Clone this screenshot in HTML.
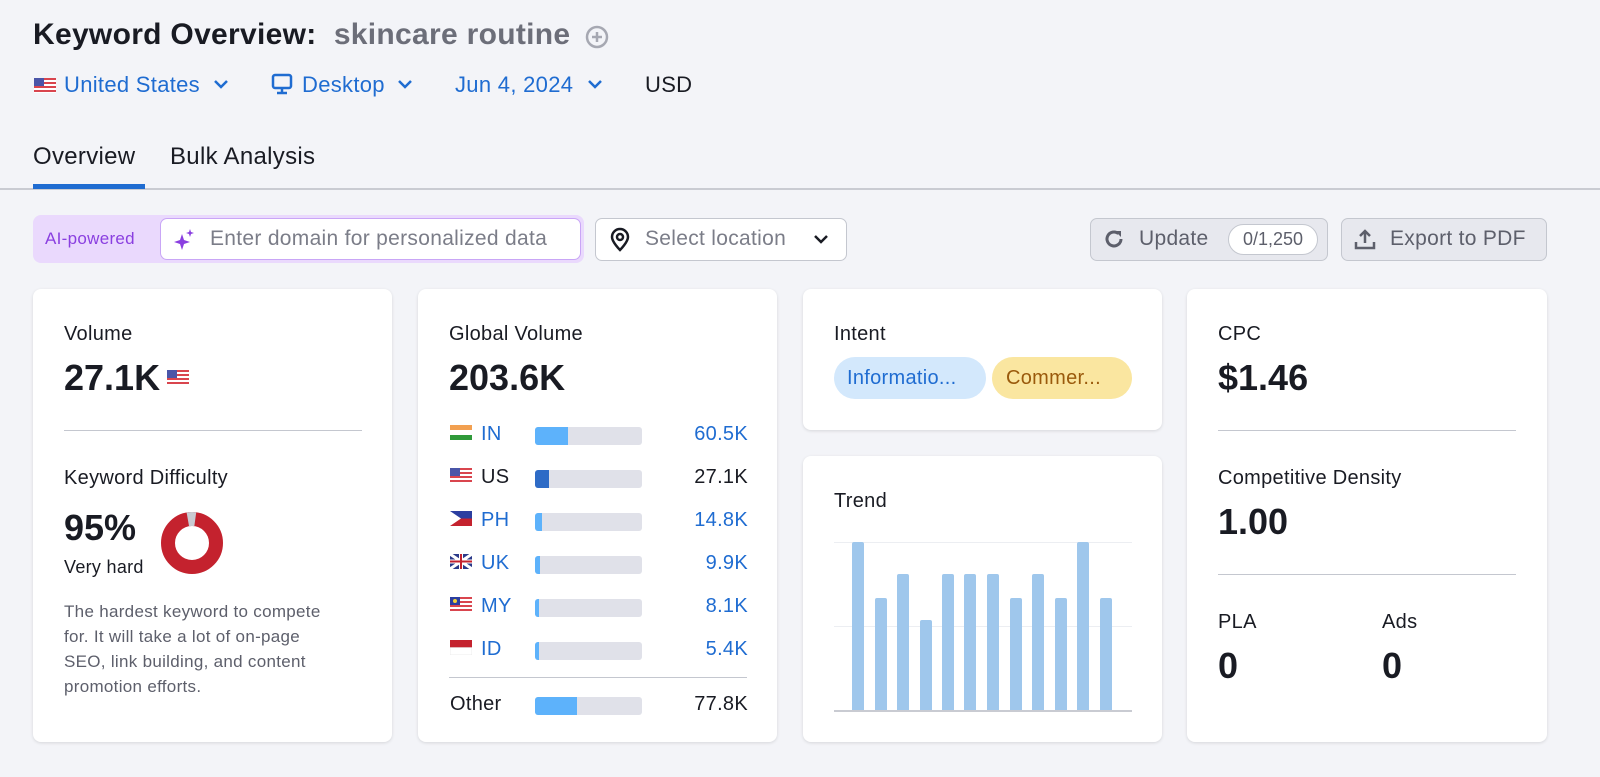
<!DOCTYPE html>
<html><head><meta charset="utf-8"><style>
*{box-sizing:border-box;margin:0;padding:0}
body{width:1600px;height:777px;background:#f3f4f8;font-family:"Liberation Sans",sans-serif;color:#191b23;position:relative;overflow:hidden;letter-spacing:0.3px}
.a{position:absolute}
.card{position:absolute;background:#fff;border-radius:8px;box-shadow:0 1px 3px rgba(0,0,0,.12)}
.lbl{font-size:20px;color:#191b23}
.big{font-size:36px;font-weight:bold;letter-spacing:0}
.blue{color:#1f6cd1}
.hr{position:absolute;height:1px;background:#c4c7cf}
.row{position:absolute;left:32px;width:298px;height:24px;font-size:20px}
.bar{position:absolute;left:85px;top:4px;width:107px;height:18px;background:#e0e1e9;border-radius:3px;overflow:hidden}
.bar i{display:block;height:100%;background:#5db2fb}
.val{position:absolute;right:0;top:0}
.fl{position:absolute;left:0;top:2px;width:22px;height:15px}
.tb{position:absolute;width:12px;background:#9fc7ec;border-radius:2px 2px 0 0;bottom:0}
</style></head><body>
<div class="a" style="left:33px;top:18px;font-size:30px;font-weight:bold;letter-spacing:0.3px">Keyword Overview:&nbsp; <span style="color:#6c6e79">skincare routine</span></div>
<svg class="a" style="left:585px;top:25px" width="24" height="24"><circle cx="12" cy="12" r="10" fill="none" stroke="#a6a8b2" stroke-width="2.5"/><path d="M12 7v10M7 12h10" stroke="#a6a8b2" stroke-width="2.5"/></svg>
<svg class="a" style="left:34px;top:78px" width="22" height="15"><rect width="22" height="15" fill="#fff"/><g fill="#d9454e"><rect y="0" width="22" height="2"/><rect y="4" width="22" height="2"/><rect y="8" width="22" height="2"/><rect y="12" width="22" height="2"/></g><rect width="10" height="8" fill="#4a55a8"/></svg>
<div class="a blue" style="left:64px;top:72px;font-size:22px">United States</div>
<svg class="a" style="left:212px;top:78px" width="18" height="12"><path d="M3 3l6 6 6-6" fill="none" stroke="#1f6cd1" stroke-width="2.5"/></svg>
<svg class="a" style="left:271px;top:73px" width="22" height="24"><rect x="2" y="2" width="18" height="13" rx="2" fill="none" stroke="#1f6cd1" stroke-width="2.5"/><path d="M11 15v4M6 20h10" stroke="#1f6cd1" stroke-width="2.5"/></svg>
<div class="a blue" style="left:302px;top:72px;font-size:22px">Desktop</div>
<svg class="a" style="left:396px;top:78px" width="18" height="12"><path d="M3 3l6 6 6-6" fill="none" stroke="#1f6cd1" stroke-width="2.5"/></svg>
<div class="a blue" style="left:455px;top:72px;font-size:22px">Jun 4, 2024</div>
<svg class="a" style="left:586px;top:78px" width="18" height="12"><path d="M3 3l6 6 6-6" fill="none" stroke="#1f6cd1" stroke-width="2.5"/></svg>
<div class="a" style="left:645px;top:72px;font-size:22px">USD</div>
<div class="a" style="left:33px;top:143px;font-size:24px">Overview</div>
<div class="a" style="left:170px;top:143px;font-size:24px">Bulk Analysis</div>
<div class="a" style="left:0;top:188px;width:1600px;height:2px;background:#c9cbd2"></div>
<div class="a" style="left:33px;top:184px;width:112px;height:5px;background:#1f6cd1"></div>
<div class="a" style="left:33px;top:215px;width:551px;height:48px;background:#ead9fd;border-radius:8px"></div>
<div class="a" style="left:45px;top:229px;font-size:17px;color:#8a3fe0">AI-powered</div>
<div class="a" style="left:160px;top:218px;width:421px;height:42px;background:#fff;border:1.5px solid #c9a6f6;border-radius:7px"></div>
<svg class="a" style="left:173px;top:228px" width="22" height="24"><path d="M9 6l2 6 6 2-6 2-2 6-2-6-6-2 6-2z" fill="#8a3fe0"/><path d="M17 1l1 3 3 1-3 1-1 3-1-3-3-1 3-1z" fill="#8a3fe0"/></svg>
<div class="a" style="left:210px;top:227px;font-size:21px;color:#7b7d88">Enter domain for personalized data</div>
<div class="a" style="left:595px;top:218px;width:252px;height:43px;background:#fff;border:1.5px solid #c4c7cf;border-radius:7px"></div>
<svg class="a" style="left:609px;top:227px" width="22" height="26"><path d="M11 23s-8-8-8-13a8 8 0 0116 0c0 5-8 13-8 13z" fill="none" stroke="#191b23" stroke-width="2.5"/><circle cx="11" cy="10" r="3" fill="none" stroke="#191b23" stroke-width="2.5"/></svg>
<div class="a" style="left:645px;top:227px;font-size:21px;color:#7b7d88">Select location</div>
<svg class="a" style="left:812px;top:233px" width="18" height="12"><path d="M3 3l6 6 6-6" fill="none" stroke="#191b23" stroke-width="2.5"/></svg>
<div class="a" style="left:1090px;top:218px;width:238px;height:43px;background:#e7e8ee;border:1.5px solid #c4c7cf;border-radius:7px"></div>
<svg class="a" style="left:1102px;top:227px" width="24" height="24"><path d="M19 12a7 7 0 11-2.5-5.4" fill="none" stroke="#5d5f6b" stroke-width="3"/><path d="M13 4h6v6z" fill="#5d5f6b"/></svg>
<div class="a" style="left:1139px;top:227px;font-size:21px;color:#5d5f6b">Update</div>
<div class="a" style="left:1228px;top:224px;width:90px;height:31px;background:#fff;border:1.5px solid #c4c7cf;border-radius:16px;font-size:18px;color:#5d5f6b;text-align:center;line-height:28px;letter-spacing:0">0/1,250</div>
<div class="a" style="left:1341px;top:218px;width:206px;height:43px;background:#e7e8ee;border:1.5px solid #c4c7cf;border-radius:7px"></div>
<svg class="a" style="left:1353px;top:227px" width="24" height="24"><path d="M12 16V4M7 9l5-5 5 5" fill="none" stroke="#5d5f6b" stroke-width="2.5"/><path d="M3 15v6h18v-6" fill="none" stroke="#5d5f6b" stroke-width="2.5"/></svg>
<div class="a" style="left:1390px;top:227px;font-size:21px;color:#5d5f6b">Export to PDF</div>

<div class="card" style="left:33px;top:289px;width:359px;height:453px">
 <div class="a lbl" style="left:31px;top:34px">Volume</div>
 <div class="a big" style="left:31px;top:68px">27.1K</div>
 <svg class="a" style="left:134px;top:81px" width="22" height="15"><rect width="22" height="15" fill="#fff"/><g fill="#d9454e"><rect width="22" height="2"/><rect y="4" width="22" height="2"/><rect y="8" width="22" height="2"/><rect y="12" width="22" height="2"/></g><rect width="10" height="8" fill="#4a55a8"/></svg>
 <div class="hr" style="left:31px;top:141px;width:298px"></div>
 <div class="a lbl" style="left:31px;top:178px">Keyword Difficulty</div>
 <div class="a big" style="left:31px;top:218px">95%</div>
 <div class="a" style="left:31px;top:268px;font-size:18px">Very hard</div>
 <svg class="a" style="left:127px;top:222px" width="64" height="64"><circle cx="32" cy="32" r="24" fill="none" stroke="#c4222e" stroke-width="14"/><circle cx="32" cy="32" r="24" fill="none" stroke="#c9cbd2" stroke-width="14" stroke-dasharray="7.5 200" transform="rotate(-100 32 32)"/></svg>
 <div class="a" style="left:31px;top:310px;width:300px;font-size:17px;line-height:25px;color:#5d5f6b;letter-spacing:0.3px">The hardest keyword to compete<br>for. It will take a lot of on-page<br>SEO, link building, and content<br>promotion efforts.</div>
</div>

<div class="card" style="left:418px;top:289px;width:359px;height:453px">
 <div class="a lbl" style="left:31px;top:34px">Global Volume</div>
 <div class="a big" style="left:31px;top:68px">203.6K</div>
 <div class="row" style="top:134px"><svg class="fl" viewBox="0 0 22 15"><rect width="22" height="5" fill="#f2a050"/><rect y="5" width="22" height="5" fill="#fff"/><rect y="10" width="22" height="5" fill="#2f9a3a"/></svg><span class="blue" style="position:absolute;left:31px">IN</span><div class="bar"><i style="width:31%"></i></div><span class="val blue">60.5K</span></div>
 <div class="row" style="top:177px"><svg class="fl" viewBox="0 0 22 15"><rect width="22" height="15" fill="#fff"/><g fill="#d9454e"><rect width="22" height="2"/><rect y="4" width="22" height="2"/><rect y="8" width="22" height="2"/><rect y="12" width="22" height="2"/></g><rect width="10" height="8" fill="#4a55a8"/></svg><span style="position:absolute;left:31px">US</span><div class="bar"><i style="width:13%;background:#2e6bc6"></i></div><span class="val">27.1K</span></div>
 <div class="row" style="top:220px"><svg class="fl" viewBox="0 0 22 15"><rect width="22" height="7.5" fill="#2b3ea0"/><rect y="7.5" width="22" height="7.5" fill="#c4222e"/><path d="M0 0l11 7.5L0 15z" fill="#fff"/></svg><span class="blue" style="position:absolute;left:31px">PH</span><div class="bar"><i style="width:7%"></i></div><span class="val blue">14.8K</span></div>
 <div class="row" style="top:263px"><svg class="fl" viewBox="0 0 22 15"><rect width="22" height="15" fill="#2b3a8a"/><path d="M0 0l22 15M22 0L0 15" stroke="#fff" stroke-width="3"/><path d="M11 0v15M0 7.5h22" stroke="#fff" stroke-width="4"/><path d="M11 0v15M0 7.5h22" stroke="#c4222e" stroke-width="2"/></svg><span class="blue" style="position:absolute;left:31px">UK</span><div class="bar"><i style="width:5%"></i></div><span class="val blue">9.9K</span></div>
 <div class="row" style="top:306px"><svg class="fl" viewBox="0 0 22 15"><rect width="22" height="15" fill="#fff"/><g fill="#d9454e"><rect width="22" height="2"/><rect y="4" width="22" height="2"/><rect y="8" width="22" height="2"/><rect y="12" width="22" height="2"/></g><rect width="10" height="8" fill="#2b3ea0"/><circle cx="5" cy="4" r="2" fill="#f3d23a"/></svg><span class="blue" style="position:absolute;left:31px">MY</span><div class="bar"><i style="width:4%"></i></div><span class="val blue">8.1K</span></div>
 <div class="row" style="top:349px"><svg class="fl" viewBox="0 0 22 15"><rect width="22" height="7.5" fill="#c4222e"/><rect y="7.5" width="22" height="7.5" fill="#fff" stroke="#ddd" stroke-width=".5"/></svg><span class="blue" style="position:absolute;left:31px">ID</span><div class="bar"><i style="width:4%"></i></div><span class="val blue">5.4K</span></div>
 <div class="hr" style="left:31px;top:388px;width:298px"></div>
 <div class="row" style="top:404px"><span style="position:absolute;left:0">Other</span><div class="bar"><i style="width:39%"></i></div><span class="val">77.8K</span></div>
</div>

<div class="card" style="left:803px;top:289px;width:359px;height:141px">
 <div class="a lbl" style="left:31px;top:34px">Intent</div>
 <div class="a" style="left:31px;top:68px;width:152px;height:42px;background:#d3e8fc;border-radius:21px;font-size:20px;color:#1f6cd1;line-height:42px;padding-left:13px">Informatio...</div>
 <div class="a" style="left:189px;top:68px;width:140px;height:42px;background:#fae6a0;border-radius:21px;font-size:20px;color:#9a5a0c;line-height:42px;padding-left:14px">Commer...</div>
</div>

<div class="card" style="left:803px;top:456px;width:359px;height:286px">
 <div class="a lbl" style="left:31px;top:34px">Trend</div>
 <div class="a" style="left:31px;top:86px;width:298px;height:1px;background:#eceef2"></div>
 <div class="a" style="left:31px;top:170px;width:298px;height:1px;background:#eceef2"></div>
 <div class="a" style="left:31px;top:86px;width:298px;height:169px">
  <div class="tb" style="left:18px;height:169px"></div>
  <div class="tb" style="left:41px;height:113px"></div>
  <div class="tb" style="left:63px;height:137px"></div>
  <div class="tb" style="left:86px;height:91px"></div>
  <div class="tb" style="left:108px;height:137px"></div>
  <div class="tb" style="left:130px;height:137px"></div>
  <div class="tb" style="left:153px;height:137px"></div>
  <div class="tb" style="left:176px;height:113px"></div>
  <div class="tb" style="left:198px;height:137px"></div>
  <div class="tb" style="left:221px;height:113px"></div>
  <div class="tb" style="left:243px;height:169px"></div>
  <div class="tb" style="left:266px;height:113px"></div>
 </div>
 <div class="a" style="left:31px;top:254px;width:298px;height:2px;background:#c9cbd2"></div>
</div>

<div class="card" style="left:1187px;top:289px;width:360px;height:453px">
 <div class="a lbl" style="left:31px;top:34px">CPC</div>
 <div class="a big" style="left:31px;top:68px">$1.46</div>
 <div class="hr" style="left:31px;top:141px;width:298px"></div>
 <div class="a lbl" style="left:31px;top:178px">Competitive Density</div>
 <div class="a big" style="left:31px;top:212px">1.00</div>
 <div class="hr" style="left:31px;top:285px;width:298px"></div>
 <div class="a lbl" style="left:31px;top:322px">PLA</div>
 <div class="a big" style="left:31px;top:356px">0</div>
 <div class="a lbl" style="left:195px;top:322px">Ads</div>
 <div class="a big" style="left:195px;top:356px">0</div>
</div>
</body></html>
